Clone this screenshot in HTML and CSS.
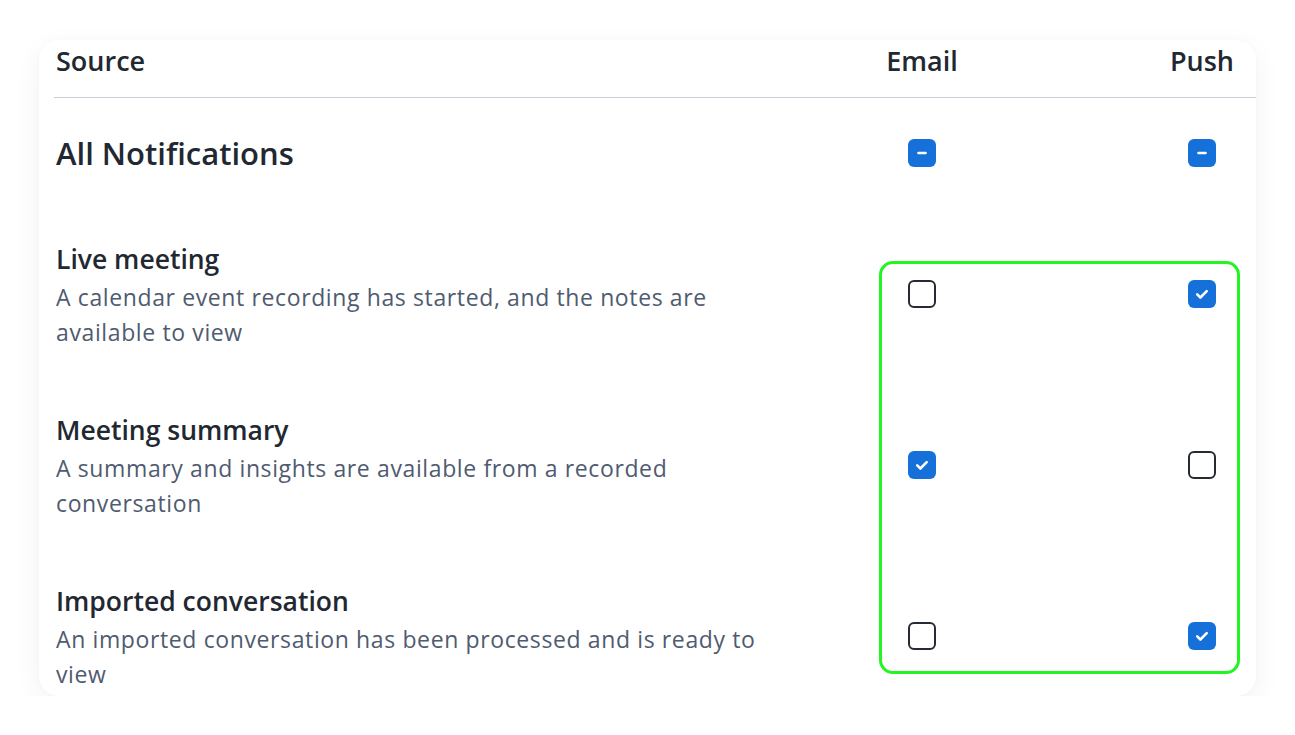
FILE: index.html
```html
<!DOCTYPE html>
<html lang="en">
<head>
<meta charset="utf-8">
<title>Notification settings</title>
<link rel="stylesheet" href="styles.css">
</head>
<body>
<div class="card">
  <div class="grid head">
    <div class="h-source">Source</div>
    <div class="h-col">Email</div>
    <div></div>
    <div class="h-col">Push</div>
    <div></div>
  </div>

  <div class="grid all-row">
    <div class="all-title">All Notifications</div>
    <div class="cell center"><span class="cb on"><svg viewBox="0 0 28 28" width="28" height="28"><path d="M10.5 14h7" stroke="#fff" stroke-width="2.6" stroke-linecap="round"/></svg></span></div>
    <div></div>
    <div class="cell center"><span class="cb on"><svg viewBox="0 0 28 28" width="28" height="28"><path d="M10.5 14h7" stroke="#fff" stroke-width="2.6" stroke-linecap="round"/></svg></span></div>
    <div></div>
  </div>

  <div class="grid item">
    <div class="src">
      <div class="title">Live meeting</div>
      <div class="desc">A calendar event recording has started, and the notes are available to view</div>
    </div>
    <div class="cell"><span class="cb"></span></div>
    <div></div>
    <div class="cell"><span class="cb on"><svg viewBox="0 0 28 28" width="28" height="28"><path d="M9.2 14.4l3.2 3.1 6.3-6.3" fill="none" stroke="#fff" stroke-width="2.6" stroke-linecap="round" stroke-linejoin="round"/></svg></span></div>
    <div></div>
  </div>

  <div class="grid item">
    <div class="src">
      <div class="title">Meeting summary</div>
      <div class="desc">A summary and insights are available from a recorded conversation</div>
    </div>
    <div class="cell"><span class="cb on"><svg viewBox="0 0 28 28" width="28" height="28"><path d="M9.2 14.4l3.2 3.1 6.3-6.3" fill="none" stroke="#fff" stroke-width="2.6" stroke-linecap="round" stroke-linejoin="round"/></svg></span></div>
    <div></div>
    <div class="cell"><span class="cb"></span></div>
    <div></div>
  </div>

  <div class="grid item last">
    <div class="src">
      <div class="title">Imported conversation</div>
      <div class="desc">An imported conversation has been processed and is ready to view</div>
    </div>
    <div class="cell"><span class="cb"></span></div>
    <div></div>
    <div class="cell"><span class="cb on"><svg viewBox="0 0 28 28" width="28" height="28"><path d="M9.2 14.4l3.2 3.1 6.3-6.3" fill="none" stroke="#fff" stroke-width="2.6" stroke-linecap="round" stroke-linejoin="round"/></svg></span></div>
    <div></div>
  </div>

  <div class="highlight"></div>
</div>
</body>
</html>
```

FILE: styles.css
```css
* { box-sizing: border-box; }

html, body {
  margin: 0;
  padding: 0;
  background: #ffffff;
}

body {
  font-family: "Open Sans", "Lato", sans-serif;
  color: #222831;
}

.card {
  position: relative;
  margin: 40px 39px 0 39px;
  width: 1217px;
  height: 656px;
  background: #ffffff;
  border-radius: 20px;
  padding-left: 15px;
  box-shadow: 0 8px 28px rgba(0, 0, 0, 0.055), 0 0 6px rgba(0, 0, 0, 0.02);
  overflow: hidden;
}

.grid {
  display: grid;
  grid-template-columns: 1fr 100px 180px 100px 4px;
}

.head {
  padding-top: 4px;
  height: 58px;
  border-bottom: 1.5px solid #c9ced8;
  font-size: 27px;
  line-height: 34px;
  font-weight: 600;
}

.h-source { padding-left: 2px; }
.h-col { text-align: center; }

.all-row {
  padding-top: 36px;
  padding-bottom: 70px;
  align-items: center;
}

.all-title {
  padding-left: 2px;
  font-size: 31px;
  line-height: 38px;
  font-weight: 600;
}

.cell {
  display: flex;
  justify-content: center;
  align-items: flex-start;
}

.item .cell { padding-top: 38px; }

.item {
  height: 171px;
}

.src { padding-left: 2px; }

.title {
  font-size: 26.5px;
  line-height: 34px;
  font-weight: 600;
  margin-bottom: 4px;
}

.desc {
  max-width: 720px;
  font-size: 23px;
  letter-spacing: 0.62px;
  line-height: 35px;
  color: #4f5b70;
}

.cb {
  display: block;
  width: 28px;
  height: 28px;
  border: 2.5px solid #262b33;
  border-radius: 6px;
  background: #ffffff;
}

.cb.on {
  border: none;
  background: #1570d9;
}

.cb svg { display: block; }

.highlight {
  position: absolute;
  left: 840px;
  top: 221px;
  width: 361px;
  height: 413px;
  border: 3px solid #22f522;
  border-radius: 14px;
  pointer-events: none;
}
```
